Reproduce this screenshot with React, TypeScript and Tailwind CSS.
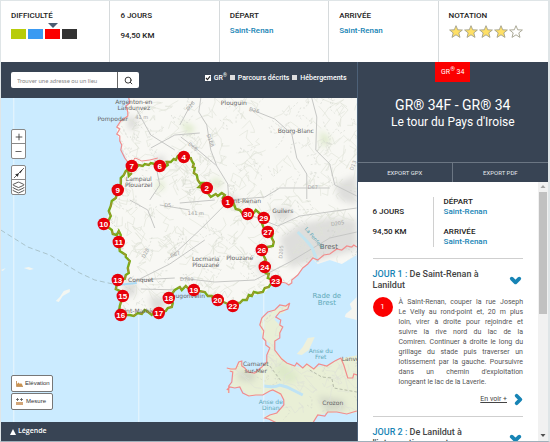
import React from 'react';
import { ChevronDown, ChevronRight, Layers, Minus, Plus, Search } from 'lucide-react';

const difficulties = ['bg-[#b7cc0b]', 'bg-[#3a9af2]', 'bg-[#fb0000]', 'bg-[#333333]'];

const steps = [
  { n: 6, x: 160, y: 166 },
  { n: 7, x: 132, y: 166 },
  { n: 4, x: 184, y: 157 },
  { n: 2, x: 207, y: 188 },
  { n: 1, x: 228, y: 202 },
  { n: 30, x: 248, y: 214 },
  { n: 29, x: 264, y: 218 },
  { n: 27, x: 268, y: 232 },
  { n: 26, x: 262, y: 250 },
  { n: 24, x: 265, y: 267 },
  { n: 23, x: 276, y: 281 },
  { n: 22, x: 233, y: 306 },
  { n: 20, x: 218, y: 300 },
  { n: 19, x: 194, y: 290 },
  { n: 18, x: 169, y: 298 },
  { n: 17, x: 159, y: 313 },
  { n: 16, x: 121, y: 315 },
  { n: 15, x: 123, y: 296 },
  { n: 13, x: 118, y: 280 },
  { n: 11, x: 119, y: 242 },
  { n: 10, x: 104, y: 224 },
  { n: 9, x: 118, y: 190 },
];

const towns = [
  { name: 'Argenton-en', x: 134, y: 104, size: 6 },
  { name: 'Landunvez', x: 134, y: 110, size: 6 },
  { name: 'Pompoder', x: 113, y: 121, size: 6 },
  { name: 'Plouguin', x: 234, y: 105, size: 6 },
  { name: 'Bourg-Blanc', x: 296, y: 133, size: 6 },
  { name: 'Lampaul', x: 139, y: 181, size: 6 },
  { name: 'Plouarzel', x: 139, y: 187, size: 6 },
  { name: 'Saint-Renan', x: 243, y: 203, size: 6 },
  { name: 'Guilers', x: 283, y: 213, size: 6 },
  { name: 'Locmaria', x: 206, y: 261, size: 6 },
  { name: 'Plouzané', x: 206, y: 267, size: 6 },
  { name: 'Plouzané', x: 240, y: 260, size: 6 },
  { name: 'Brest', x: 329, y: 249, size: 7 },
  { name: 'Conquet', x: 141, y: 282, size: 6 },
  { name: 'Plougonvelin', x: 186, y: 298, size: 6 },
  { name: 'Saint-Mathieu', x: 138, y: 313, size: 6 },
  { name: 'Camaret', x: 256, y: 366, size: 6 },
  { name: 'sur-Mer', x: 256, y: 373, size: 6 },
  { name: 'Crozon', x: 333, y: 405, size: 6 },
  { name: 'Lanvé', x: 351, y: 361, size: 6 },
];

const roadLabels = [
  { name: '41 m', x: 142, y: 119, angle: 0 },
  { name: '141 m', x: 196, y: 215, angle: 0 },
  { name: 'D26', x: 192, y: 107, angle: -50 },
  { name: 'D26', x: 254, y: 112, angle: 15 },
  { name: 'D168', x: 209, y: 141, angle: 70 },
  { name: 'D68', x: 192, y: 148, angle: 38 },
  { name: 'D5', x: 168, y: 207, angle: 0 },
  { name: 'D67', x: 313, y: 189, angle: 0 },
  { name: 'D28', x: 147, y: 254, angle: -62 },
  { name: 'D67', x: 176, y: 256, angle: -20 },
  { name: 'D789', x: 187, y: 281, angle: 0 },
  { name: 'D205', x: 283, y: 252, angle: -85 },
  { name: 'D205', x: 338, y: 225, angle: -8 },
  { name: 'D13', x: 355, y: 166, angle: -70 },
];

const waterLabels = [
  { name: 'Rade de', x: 327, y: 298, size: 7 },
  { name: 'Brest', x: 327, y: 305, size: 7 },
  { name: 'Anse du', x: 321, y: 353, size: 6 },
  { name: 'Fret', x: 321, y: 359, size: 6 },
  { name: 'Anse de', x: 271, y: 404, size: 6 },
  { name: 'Dinan', x: 271, y: 410, size: 6 },
];

const mainland =
  'M129 96 L130 103 126 108 128 115 121 121 117 128 118 136 121 141 122 149 126 158 128 163 124 172 121 187 113 199 110 213 104 221 106 228 113 233 119 231 121 243 118 248 129 260 129 268 124 278 113 276 112 280 118 288 123 296 119 308 119 316 132 316 143 311 154 316 167 309 172 306 169 298 175 290 182 288 194 290 205 293 218 300 233 307 248 299 254 295 264 293 276 282 290 284 293 280 303 268 313 259 318 264 330 260 342 264 357 255 V96 Z';

const peninsula =
  'M290 303 L275 310 262 318 260 325 263 338 270 344 267 362 255 373 245 368 240 361 235 368 227 368 232 372 233 382 227 392 229 393 230 387 240 387 248 396 263 395 273 390 283 398 285 405 277 413 265 416 267 419 277 423 313 423 318 415 337 412 347 414 358 412 V355 L343 358 327 365 313 368 307 363 303 368 295 366 287 363 275 350 275 342 280 335 282 327 275 320 275 315 284 313 Z';

const coast =
  'M129 98 L130 103 126 106 128 112 128 116 121 121 117 127 120 129 117 134 120 136 120 141 122 145 121 150 125 158 128 162 M276 281 L286 283 289 285 292 283 292 280 298 275 303 268 308 264 313 258 318 260 324 255 330 254 337 249 342 250 347 246 352 247 354 245 357 247 M290 303 L286 306 280 305 275 310 268 312 262 318 260 325 264 331 263 338 266 341 266 345 270 348 267 355 267 362 262 367 257 371 255 373 248 372 245 368 242 366 242 361 239 362 236 369 231 369 227 368 M230 371 L233 372 232 382 229 386 229 393 M227 390 L230 387 235 388 240 387 243 393 249 396 256 395 263 395 270 391 273 390 281 394 284 400 284 405 277 413 270 415 265 418 269 419 277 423 M290 303 L288 309 280 312 276 317 281 320 280 325 283 327 280 333 280 338 275 341 275 350 282 359 287 363 295 366 297 363 303 368 307 364 314 369 319 364 327 366 335 361 341 358 344 365 348 378 353 378 354 374 358 375 M313 423 L318 415 325 416 328 412 337 412 347 414 357 411';

const trail =
  'M132 166 L134 169 137 167 139 165 143 166 145 164 149 165 151 163 155 164 160 163 165 167 168 165 167 162 171 162 174 159 176 160 178 156 184 157 191 158 192 161 194 164 193 167 195 168 194 173 197 175 198 180 200 183 203 183 199 187 207 188 208 193 211 197 216 194 218 196 222 193 225 195 223 198 228 202 232 205 234 204 236 209 240 210 243 214 248 214 254 213 256 210 264 217 262 223 264 228 267 232 273 234 272 238 274 242 273 246 268 247 262 250 264 256 266 260 264 262 265 267 266 273 269 274 268 278 276 281 M276 281 L271 284 269 287 265 288 263 292 258 293 254 292 252 296 249 295 247 300 243 300 240 303 236 303 233 306 226 303 218 300 214 300 212 296 208 296 205 292 199 291 194 290 188 288 186 286 182 290 180 287 175 290 169 298 173 303 172 307 168 308 166 311 159 313 155 312 152 315 147 311 145 310 142 314 138 313 134 316 130 315 121 315 119 313 120 306 123 296 120 291 116 289 118 280 125 279 126 275 129 273 128 268 130 261 126 257 126 255 120 251 119 242 121 235 119 231 117 235 113 234 112 230 104 224 109 220 111 216 109 211 111 206 112 201 116 198 118 190 121 184 121 178 124 175 126 171 132 166 M128 168 L129 176 132 173';

// small deterministic generator, so that the field boundaries never move between renders
const makeRandom = (seed: number) => () => {
  seed = (seed * 1664525 + 1013904223) % 4294967296;
  return seed / 4294967296;
};

const makeLanes = (count: number, seed: number) => {
  const random = makeRandom(seed);
  return Array.from({ length: count }, () => {
    let d = `M${100 + random() * 258} ${98 + random() * 324}`;
    for (let i = 0; i < 4; i++) {
      d += ` l${random() * 18 - 9} ${random() * 18 - 9}`;
    }
    return d;
  }).join(' ');
};

const fieldLanes = makeLanes(520, 7);
const smallLanes = makeLanes(160, 31);

const HikeMap = () => (
  <svg
    className="absolute inset-0 h-full w-full"
    viewBox="1 98 356 324"
    preserveAspectRatio="xMidYMid slice"
    fontFamily="'DejaVu Sans', sans-serif"
    role="img"
    aria-label="Carte du tour du Pays d'Iroise"
  >
    <defs>
      <clipPath id="land">
        <path d={mainland} />
        <path d={peninsula} />
      </clipPath>
      <filter id="soft">
        <feGaussianBlur stdDeviation="3" />
      </filter>
    </defs>
    <rect x="1" y="98" width="356" height="324" fill="#cbebff" />
    <path d={mainland} fill="#f8f8f4" />
    <path d={peninsula} fill="#e9efd6" />
    <path d="M315 337 L308 338 303 347 297 354 302 355 309 350 Z" fill="#eef0dc" />
    <path d="M357 297 L350 304 352 309 346 314 345 317 357 320 Z" fill="#f5f5f0" />
    <path d="M70 289 L64 291 60 297 56 301 59 302 63 296 70 292 Z M24 268 l5 -1 5 2 -4 1 Z M1 270 l5 -2 -3 3 Z" fill="#f3f6f2" />

    <g clipPath="url(#land)" fill="none">
      <g filter="url(#soft)">
        <path d="M280 238 L300 224 330 218 357 220 V250 L310 262 290 268 Z M335 184 L357 175 V205 L340 200 Z" fill="#dededc" />
        <path d="M225 196 l12 0 2 9 -10 3 Z M272 210 l18 -2 2 10 -14 2 Z M122 283 l14 0 0 12 -10 2 Z M256 262 l14 0 0 12 -10 0 Z M150 296 l18 2 -4 12 -12 0 Z M155 157 l10 -1 0 8 -10 0 Z M128 115 l10 4 -2 10 -8 0 Z" fill="#dcdcd9" />
        <path d="M240 370 l16 2 -2 10 -16 -2 Z M318 396 l26 4 2 10 -20 2 Z" fill="#d3d8c8" />
        <path d="M212 178 l10 2 -2 8 -8 0 Z M157 182 l8 0 -2 8 -6 0 Z M282 360 l18 18 -12 6 -14 -12 Z M180 120 l16 8 -8 8 Z M320 130 l12 10 -10 8 Z" fill="#dde9c9" />
      </g>
      <path d={fieldLanes} stroke="#dfe2d7" strokeWidth="0.6" />
      <path d={smallLanes} stroke="#cdd0c8" strokeWidth="0.5" strokeDasharray="2 2" />
      <path
        d="M201 98 L199 112 207 125 211 150 217 166 228 184 229 200 M181 137 L197 149 216 165 M180 125 L193 101 M250 109 L275 119 292 134 297 158 307 174 307 199 M312 98 L317 117 316 150 330 164 335 185 357 196 M229 200 L265 197 280 188 330 188 M180 203 L215 200 M150 200 L160 185 155 160 M160 205 L190 210 M168 260 L200 230 228 202 M134 282 L170 264 205 240 M141 289 L180 290 M180 278 L215 282 255 280 290 262 330 238 357 232 M137 280 L175 278 M248 214 L278 226 300 216 357 208 M155 228 L148 210 130 200 M151 148 L175 135 200 133 M137 110 L151 135 175 150"
        stroke="#c6c7c5"
        strokeWidth="1"
      />
      <path d="M264 386 Q275 388 280 385 L287 387 303 395" stroke="#bfe3f5" strokeWidth="3" />
      <path d="M270 366 L282 382 M310 370 L322 377 332 378 334 388 357 392" stroke="#aab09e" strokeWidth="0.8" strokeDasharray="3 2" />
    </g>

    <path d="M1 230 L28 247 50 255 80 273 95 280 113 284" fill="none" stroke="#aac4cc" strokeWidth="1" strokeDasharray="5 3" />
    <path d="M117 285 L137 283" stroke="#a9daf5" strokeWidth="2" />
    <path d="M298 232 L306 240 312 247 318 262" fill="none" stroke="#c3e4ef" strokeWidth="3" />
    <path d="M14 98 V422 M139 315 V422 M264 294 V422" stroke="#eaf6fd" strokeWidth="1" />
    <path d={coast} fill="none" stroke="#f28c8c" strokeWidth="1.2" />
    <path d="M132 164 L135 158 138 159 142 161 150 160 158 158" fill="none" stroke="#f28c8c" strokeWidth="1" />
    <path d={trail} fill="none" stroke="#78ab16" strokeWidth="2.4" strokeLinejoin="miter" />
    <path d={trail} fill="none" stroke="#c87b46" strokeWidth="0.7" strokeDasharray="5 4" />

    <g fill="#a3a3a3" fontSize="5" textAnchor="middle">
      {roadLabels.map(label => (
        <text key={`${label.x}-${label.y}`} x={label.x} y={label.y} transform={`rotate(${label.angle} ${label.x} ${label.y})`}>
          {label.name}
        </text>
      ))}
    </g>
    <g fill="#666666" textAnchor="middle">
      {towns.map(town => (
        <text key={`${town.x}-${town.y}`} x={town.x} y={town.y} fontSize={town.size}>
          {town.name}
        </text>
      ))}
    </g>
    <g fill="#5fa9b8" textAnchor="middle">
      {waterLabels.map(label => (
        <text key={label.name} x={label.x} y={label.y} fontSize={label.size}>
          {label.name}
        </text>
      ))}
      <text x="313" y="239" fontSize="5" transform="rotate(50 313 239)">La Penfeld</text>
    </g>

    {steps.map(step => (
      <g key={step.n}>
        <circle cx={step.x} cy={step.y} r="6.2" fill="#e6000a" />
        <text
          x={step.x}
          y={step.y + 3}
          fill="#ffffff"
          fontFamily="'Liberation Sans', sans-serif"
          fontSize="8"
          fontWeight="700"
          textAnchor="middle"
        >
          {step.n}
        </text>
      </g>
    ))}
  </svg>
);

const Star = ({ filled }: { filled: boolean }) => (
  <svg viewBox="0 0 14 13" className="h-[13px] w-[14px]">
    <path
      d="M7 0.7 L8.7 4.8 13.4 5 9.8 7.9 11 12.4 7 9.8 3 12.4 4.2 7.9 0.6 5 5.3 4.8 Z"
      fill={filled ? '#ffe066' : '#ffffff'}
      stroke="#a3a08c"
      strokeWidth="0.9"
    />
  </svg>
);

const Summary = () => (
  <header className="grid grid-cols-5 divide-x divide-[#d6dadc] bg-white font-medium leading-[10px] text-[#222]">
    <div className="h-[61px] px-[10px] pt-[10px]">
      <h2>DIFFICULTÉ</h2>
      <div className="mt-[8px] flex gap-[2px]">
        {difficulties.map((color, i) => (
          <span key={color} className={`relative h-[10px] w-[15px] ${color}`}>
            {i === 2 && (
              <svg viewBox="0 0 10 5" className="absolute -top-[6px] left-[3px] h-[5px] w-[10px]">
                <path d="M0 0 H10 L5 5 Z" fill="#4b5d72" />
              </svg>
            )}
          </span>
        ))}
      </div>
    </div>
    <div className="px-[10px] pt-[10px]">
      <p>6 JOURS</p>
      <p className="mt-[10px]">94,50 KM</p>
    </div>
    <div className="px-[10px] pt-[10px]">
      <h2>DÉPART</h2>
      <a href="#depart" className="mt-[5px] block text-[#1784b5]">Saint-Renan</a>
    </div>
    <div className="px-[10px] pt-[10px]">
      <h2>ARRIVÉE</h2>
      <a href="#arrivee" className="mt-[5px] block text-[#1784b5]">Saint-Renan</a>
    </div>
    <div className="px-[10px] pt-[10px]">
      <h2>NOTATION</h2>
      <div className="mt-[4px] flex gap-px" role="img" aria-label="4 sur 5">
        {[1, 2, 3, 4, 5].map(n => (
          <Star key={n} filled={n <= 4} />
        ))}
      </div>
    </div>
  </header>
);

const Filter = ({ label, checked = false }: { label: React.ReactNode; checked?: boolean }) => (
  <label className="flex items-center gap-[3px]">
    <input
      type="checkbox"
      defaultChecked={checked}
      className="peer h-[5px] w-[5px] appearance-none bg-[#dddddd] checked:hidden"
    />
    <svg viewBox="0 0 6 6" className="hidden h-[6px] w-[6px] bg-white peer-checked:block">
      <path d="M1 3 L2.5 4.6 5 1.3" fill="none" stroke="#222" strokeWidth="1.1" />
    </svg>
    <span>{label}</span>
  </label>
);

const MapPanel = () => (
  <section className="flex min-w-0 flex-1 flex-col">
    <div className="flex h-[36px] shrink-0 items-center justify-between bg-[#384454] px-[10px]">
      <form className="flex h-[16px] overflow-hidden rounded-[2px] bg-white" onSubmit={e => e.preventDefault()}>
        <input
          type="text"
          aria-label="Trouver une adresse ou un lieu"
          placeholder="Trouver une adresse ou un lieu"
          className="w-[106px] px-[6px] font-['Lato',sans-serif] text-[6px] text-gray-700 outline-none placeholder:text-[#888]"
        />
        <button type="submit" aria-label="Rechercher" className="flex w-[22px] items-center justify-center border-l border-[#666]">
          <Search className="h-[9px] w-[9px] text-[#333]" strokeWidth={2.6} />
        </button>
      </form>
      <div className="mb-[5px] flex gap-[3px] text-[7px] font-medium leading-[10px] text-white">
        <Filter label={<>GR<sup className="text-[5px]">®</sup></>} checked />
        <Filter label="Parcours décrits" />
        <Filter label="Hébergements" />
      </div>
    </div>

    <div className="relative min-h-[200px] flex-1 overflow-hidden">
      <HikeMap />
      <div className="absolute left-[10px] top-[31px] flex flex-col gap-[6px] text-[#333]">
        <div className="flex w-[15px] flex-col divide-y divide-[#888] rounded-[2px] border border-[#888] bg-white">
          <button aria-label="Zoom avant" className="flex h-[14px] items-center justify-center">
            <Plus className="h-[10px] w-[10px]" />
          </button>
          <button aria-label="Zoom arrière" className="flex h-[14px] items-center justify-center">
            <Minus className="h-[9px] w-[9px]" />
          </button>
        </div>
        <div className="flex w-[15px] flex-col divide-y divide-[#888] rounded-[2px] border border-[#888] bg-white">
          <button aria-label="Tracé" className="flex h-[14px] items-center justify-center">
            <svg viewBox="0 0 12 12" className="h-[12px] w-[12px]">
              <path d="M1 11 L11 1" stroke="#444" strokeWidth="0.8" />
              <path d="M2.6 7.6 L5.4 6.8 4.6 9.4 Z M6.6 5.2 L9.2 2.8 7.4 5.8 Z" fill="#222" stroke="#222" strokeWidth="0.5" />
            </svg>
          </button>
          <button aria-label="Couches" className="flex h-[14px] items-center justify-center">
            <Layers className="h-[13px] w-[13px]" strokeWidth={1.5} />
          </button>
        </div>
      </div>
      <div className="absolute bottom-[12px] left-[10px] flex w-[42px] flex-col gap-px font-['Liberation_Sans',sans-serif] text-[6px] text-[#333]">
        <button className="flex h-[17px] items-center gap-[2px] rounded-[2px] border border-[#777] bg-white px-[4px]">
          <svg viewBox="0 0 7 6" className="h-[6px] w-[7px] shrink-0">
            <path d="M0.5 0 V5.5 H7" fill="none" stroke="#b98245" strokeWidth="0.8" />
            <path d="M1 5 V3 L2.5 1.5 4 3 5 2 6.5 4 V5 Z" fill="#c9924f" />
          </svg>
          Elévation
        </button>
        <button className="flex h-[17px] items-center gap-[3px] rounded-[2px] border border-[#777] bg-white px-[4px]">
          <svg viewBox="0 0 7 7" className="h-[7px] w-[7px] shrink-0">
            <path d="M0 1.5 H3 M4 1.5 H7 M1.5 0 V3 M5.5 0 V3" stroke="#555" strokeWidth="0.8" />
            <path d="M0 4 H7 V7 H0 Z" fill="#d2a679" />
          </svg>
          Mesure
        </button>
      </div>
    </div>

    <button className="flex h-[19px] shrink-0 items-center gap-[2px] bg-[#384454] px-[9px] font-['Open_Sans',sans-serif] text-[7px] font-semibold text-white">
      <svg viewBox="0 0 6 6" className="mt-px h-[6px] w-[6px]">
        <path d="M3 0 L6 6 H0 Z" fill="#ffffff" />
      </svg>
      Légende
    </button>
  </section>
);

const description = [
  'À Saint-Renan, couper la rue Joseph',
  'Le Velly au rond-point et, 20 m plus',
  'loin, virer à droite pour rejoindre et',
  'suivre la rive nord du lac de la',
  'Comiren. Continuer à droite le long du',
  'grillage du stade puis traverser un',
  'lotissement par la gauche. Poursuivre',
  "dans un chemin d'exploitation",
];

const RoutePanel = () => (
  <aside className="flex w-[35%] shrink-0 flex-col border-l border-[#4d6178] bg-white">
    <div className="flex h-[100px] shrink-0 flex-col items-center bg-[#384454] text-white">
      <span className="bg-[#fb0000] px-[6px] py-[5px] text-[7px] leading-[10px]">
        GR<sup className="text-[6px]">®</sup> 34
      </span>
      <h1 className="mt-[15px] text-center text-[12px] leading-[17px]">
        <span className="block text-[14px]">GR® 34F - GR® 34</span>
        Le tour du Pays d'Iroise
      </h1>
    </div>
    <div className="grid h-[20px] shrink-0 grid-cols-2 divide-x divide-[#6b7683] border-t border-[#6b7683] bg-[#384454] text-[6px] text-[#e4e8ec]">
      <button>EXPORT GPX</button>
      <button>EXPORT PDF</button>
    </div>

    <div className="flex min-h-0 flex-1">
      <div className="min-w-0 flex-1 overflow-hidden px-[15px]">
        <div className="mt-[15px] flex h-[50px] font-medium leading-[10px] text-[#222]">
          <div className="flex w-[60px] flex-col justify-center gap-[10px]">
            <p>6 JOURS</p>
            <p>94,50 KM</p>
          </div>
          <div className="flex flex-1 flex-col justify-between border-l border-[#d0d0d0] pl-[10px]">
            <p>DÉPART<a href="#depart" className="block text-[#1784b5]">Saint-Renan</a></p>
            <p>ARRIVÉE<a href="#arrivee" className="block text-[#1784b5]">Saint-Renan</a></p>
          </div>
        </div>

        <article className="mt-[11px] border-t border-[#cfcfcf] pt-[10px]">
          <div className="flex items-center justify-between">
            <h3 className="text-[9px] font-medium leading-[11px] text-[#444]">
              <span className="text-[#1784b5]">JOUR 1 :</span> De Saint-Renan à<br />Lanildut
            </h3>
            <button aria-label="Replier le jour 1">
              <ChevronDown className="h-[15px] w-[15px] text-[#1784b5]" strokeWidth={6} />
            </button>
          </div>
          <div className="mt-[6px] flex gap-[6px]">
            <span className="flex h-[20px] w-[20px] shrink-0 items-center justify-center rounded-full bg-[#fb0000] text-white">1</span>
            <p className="min-w-0 flex-1 text-[7px] leading-[10px] text-[#555]">
              {description.map(line => (
                <span key={line} className="block whitespace-nowrap [text-align-last:justify]">{line}</span>
              ))}
              <span className="block whitespace-nowrap">longeant le lac de la Laverie.</span>
            </p>
          </div>
          <div className="mt-[5px] flex items-center justify-end gap-[4px]">
            <a href="#jour-1" className="text-[7px] text-[#444] underline">En voir +</a>
            <ChevronRight className="-mr-[3px] h-[15px] w-[15px] text-[#1784b5]" strokeWidth={6} />
          </div>
        </article>

        <article className="mt-[9px] border-t border-[#cfcfcf] pt-[10px]">
          <div className="flex items-center justify-between">
            <h3 className="whitespace-nowrap text-[9px] font-medium leading-[11px] text-[#444]">
              <span className="text-[#1784b5]">JOUR 2 :</span> De Lanildut à<br />l'intersection avant gagner
            </h3>
            <button aria-label="Déplier le jour 2">
              <ChevronDown className="h-[15px] w-[15px] text-[#1784b5]" strokeWidth={6} />
            </button>
          </div>
        </article>
      </div>

      <div className="flex w-[10px] shrink-0 flex-col items-center bg-[#f1f1f1]">
        <svg viewBox="0 0 10 10" className="h-[10px] w-[10px] shrink-0">
          <path d="M5 3 L7.5 6 H2.5 Z" fill="#a3a3a3" />
        </svg>
        <div className="h-[47%] w-[8px] bg-[#c1c1c1]" />
        <svg viewBox="0 0 10 10" className="mt-auto h-[10px] w-[10px] shrink-0">
          <path d="M2.5 3 H7.5 L5 6 Z" fill="#505050" />
        </svg>
      </div>
    </div>
  </aside>
);

const App = () => {
  return (
    <div className="flex h-screen flex-col border border-r-2 border-[#dfe5e7] border-b-[#9fb0bb] bg-white font-['Roboto',sans-serif] text-[8px]">
      <Summary />
      <main className="flex min-h-0 flex-1">
        <MapPanel />
        <RoutePanel />
      </main>
    </div>
  );
};

export default App;
